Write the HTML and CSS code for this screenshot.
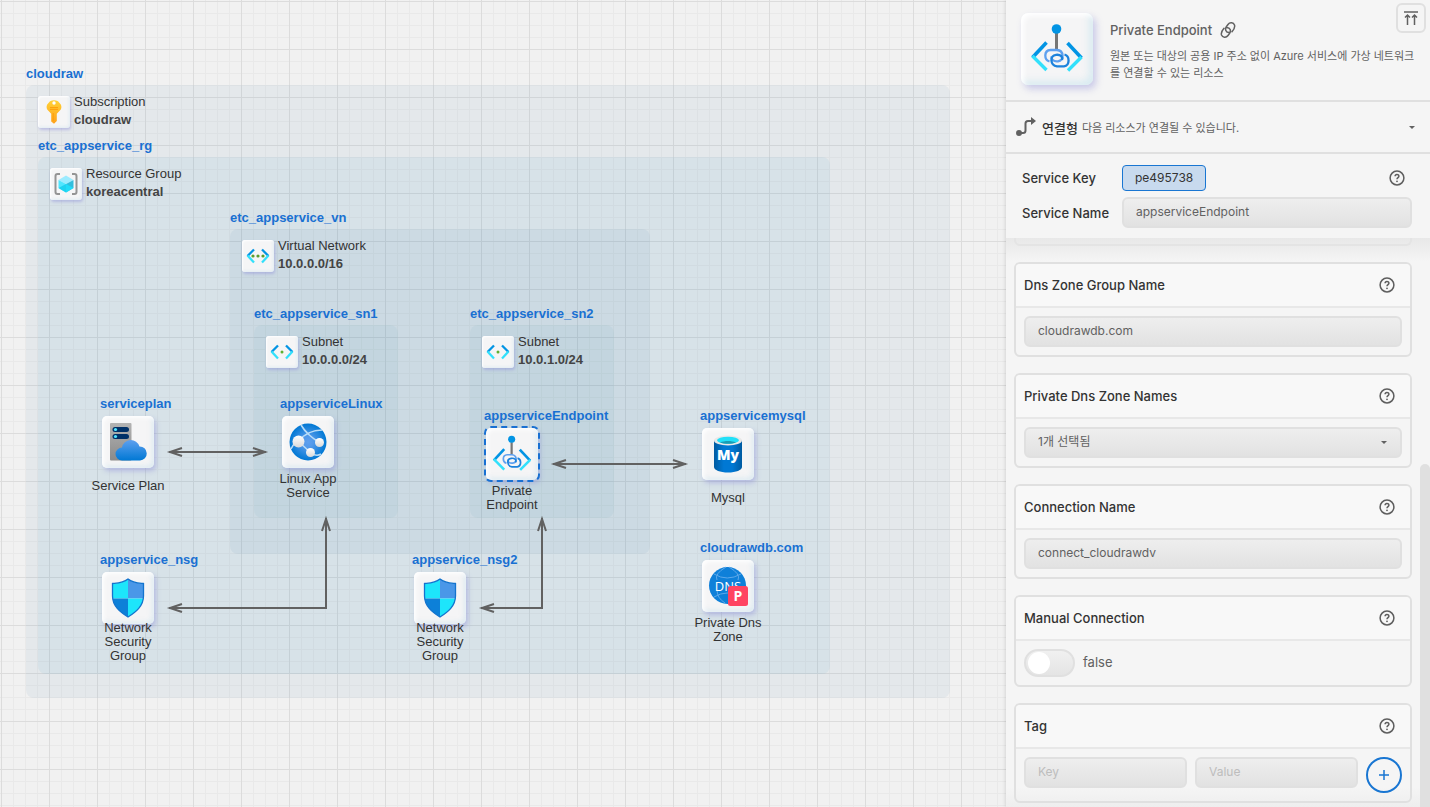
FILE: index.html
```html
<!DOCTYPE html>
<html lang="ko">
<head>
<meta charset="utf-8">
<title>Private Endpoint</title>
<link rel="stylesheet" href="styles.css">
</head>
<body>
<svg class="defs" aria-hidden="true">
  <defs>
    <linearGradient id="g-blue" x1="0" y1="1" x2="0" y2="0"><stop offset="0" stop-color="#0078d4"/><stop offset="1" stop-color="#5ea0ef"/></linearGradient>
    <linearGradient id="g-key" x1="0" y1="0" x2="0" y2="1"><stop offset="0" stop-color="#ffd137"/><stop offset="1" stop-color="#fea11b"/></linearGradient>
    <linearGradient id="g-server" x1="0" y1="0" x2="0" y2="1"><stop offset="0" stop-color="#b3b3b3"/><stop offset="1" stop-color="#8a8a8a"/></linearGradient>
    <linearGradient id="g-db" x1="0" y1="0" x2="1" y2="0"><stop offset="0" stop-color="#005ba1"/><stop offset=".35" stop-color="#0078d4"/><stop offset=".65" stop-color="#0078d4"/><stop offset="1" stop-color="#005ba1"/></linearGradient>
    <radialGradient id="g-globe"><stop offset="0" stop-color="#5ea0ef"/><stop offset=".3" stop-color="#5299ea"/><stop offset="1" stop-color="#0078d4"/></radialGradient>
    <linearGradient id="g-ball" x1="0" y1="0" x2="0" y2="1"><stop offset="0" stop-color="#fff"/><stop offset="1" stop-color="#d9d9d9"/></linearGradient>
    <marker id="arrow" markerUnits="userSpaceOnUse" markerWidth="18" markerHeight="12" refX="14" refY="6" orient="auto-start-reverse"><path d="M1 2 L13 6 L1 10 M13 6 H4" fill="none" stroke="#616161" stroke-width="2"/></marker>
    <symbol id="i-endpoint" viewBox="0 0 54 54">
      <path d="M26.500 11V28" stroke="#767676" stroke-width="3"/>
      <circle cx="26.500" cy="7" r="4.800" fill="#0294e4"/>
      <path d="M16.500 20.500L2.500 35.500" stroke="#0294e4" stroke-width="3.600"/><path d="M2.500 34L16.500 48" stroke="#32e0fb" stroke-width="3.400"/>
      <path d="M37.500 21L51.500 36" stroke="#0294e4" stroke-width="3.600"/><path d="M51.500 35L38 48.500" stroke="#32e0fb" stroke-width="3.400"/>
      <path d="M19.500 39.500C14 38 13.500 28.500 20.500 28H27C34 28.500 34.500 38.500 28 39.300 23.500 39.800 21 37.500 21.500 34.500" fill="none" stroke="#5ea0ef" stroke-width="2.300"/>
      <path d="M34.500 32.500C40 34 40 43.500 34 44.300H27C20 43.500 19.500 33.500 26 32.800 31 32.300 33 35 32 38" fill="none" stroke="#1c82dc" stroke-width="2.300"/>
    </symbol>
    <symbol id="i-key" viewBox="0 0 18 24">
      <path d="M5 1.200Q9-.8 13 1.200L15.800 4.500Q17 7 15.800 9.500L11.800 13.800V21L9 23.700 6.200 21.500V13.800L2.200 9.500Q1 7 2.200 4.500z" fill="url(#g-key)"/>
      <circle cx="9" cy="3" r="1.700" fill="#fff"/><path d="M5 7.600h8M5 9.400h8" stroke="#ff9d0a" stroke-width="1"/><path d="M8.200 13v8" stroke="#ff9d0a" stroke-width="1"/>
    </symbol>
    <symbol id="i-rg" viewBox="0 0 24 22">
      <path d="M6 1H3.500Q1.500 1 1.500 3V19Q1.500 21 3.500 21H6M18 1H20.500Q22.500 1 22.500 3V19Q22.500 21 20.500 21H18" fill="none" stroke="#949494" stroke-width="2"/>
      <path d="M12 2.500L19.500 7 12 11 4.500 7z" fill="#9cebff"/><path d="M4.500 7L12 11V19.500L4.500 15z" fill="#50e6ff"/><path d="M19.500 7L12 11V19.500L19.500 15z" fill="#32bedd"/><path d="M4.500 15L12 11v8.500z" fill="#1fd2f0"/><path d="M19.500 15L12 11v8.500z" fill="#21dcf8"/>
    </symbol>
    <symbol id="i-vnet" viewBox="0 0 24 16">
      <path d="M8 1.500L1.500 8" stroke="#0294e4" stroke-width="2.300"/><path d="M1.500 7.500L8 14.500" stroke="#32e0fb" stroke-width="2.300"/>
      <path d="M16 1.500L22.500 8" stroke="#0294e4" stroke-width="2.300"/><path d="M22.500 7.500L16 14.500" stroke="#32e0fb" stroke-width="2.300"/>
      <g fill="#5a9e2f"><circle cx="7" cy="8" r="1.600"/><circle cx="12" cy="8" r="1.600"/><circle cx="17" cy="8" r="1.600"/></g>
    </symbol>
    <symbol id="i-subnet" viewBox="0 0 24 16">
      <path d="M8 1.500L1.500 8" stroke="#0294e4" stroke-width="2.300"/><path d="M1.500 7.500L8 14.500" stroke="#32e0fb" stroke-width="2.300"/>
      <path d="M16 1.500L22.500 8" stroke="#0294e4" stroke-width="2.300"/><path d="M22.500 7.500L16 14.500" stroke="#32e0fb" stroke-width="2.300"/>
      <circle cx="12" cy="8" r="1.500" fill="#5fb030"/>
    </symbol>
    <symbol id="i-plan" viewBox="0 0 40 40">
      <rect x="2" y="1" width="21.500" height="37.500" rx="1" fill="url(#g-server)"/>
      <rect x="4.500" y="5" width="16.500" height="5" rx="2.500" fill="#003067"/><rect x="4.500" y="12" width="16.500" height="5" rx="2.500" fill="#003067"/>
      <circle cx="7.500" cy="7.500" r="1.600" fill="#50e6ff"/><circle cx="7.500" cy="14.500" r="1.600" fill="#50e6ff"/>
      <path d="M14 38.500A6.500 6.500 0 0 1 14 25.500 9 9 0 0 1 31.500 24.500 7 7 0 0 1 32 38.500z" fill="url(#g-blue)"/>
    </symbol>
    <symbol id="i-app" viewBox="0 0 38 38">
      <circle cx="19" cy="19" r="18.500" fill="url(#g-globe)"/>
      <g fill="none" stroke="#b8dcf8" stroke-width="1.600"><path d="M12 2C16 9 24 16 30 19M33 7C24 7 15 11 10 18M2 26C5 20 8 18 10 18M10 19L21 29M21 30Q28 34 32 31"/></g>
      <circle cx="9.500" cy="18.500" r="6" fill="url(#g-ball)"/><circle cx="30.500" cy="19.500" r="4.500" fill="url(#g-ball)"/><circle cx="21.500" cy="29.500" r="4.500" fill="url(#g-ball)"/>
    </symbol>
    <symbol id="i-mysql" viewBox="0 0 30 38">
      <path d="M1 5V32c0 3 6 5.500 14 5.500S29 35 29 32V5z" fill="url(#g-db)"/>
      <ellipse cx="15" cy="5.500" rx="14" ry="5" fill="#e8e8e8"/><ellipse cx="15" cy="5.300" rx="11" ry="3.500" fill="#21e0f8"/><path d="M7 7.500c5-2 11-2 16 0-4 1.800-12 1.800-16 0z" fill="#1a9bb4"/>
      <text x="15" y="25" text-anchor="middle" class="my-mark">My</text>
    </symbol>
    <symbol id="i-shield" viewBox="0 0 34 40">
      <clipPath id="shield-clip"><path d="M17 1C22 5 27 5 32.500 5.500V18C32.500 28 25 34 17 39 9 34 1.500 28 1.500 18V5.500C7 5 12 5 17 1z"/></clipPath>
      <g clip-path="url(#shield-clip)"><path d="M0 0H17V20.500H0z" fill="#1de5fb"/><path d="M17 0H34V20.500H17z" fill="#4a97e8"/><path d="M0 20.500H17V40H0z" fill="#0d80d8"/><path d="M17 20.500H34V40H17z" fill="#1de5fb"/></g>
      <path d="M17 1C22 5 27 5 32.500 5.500V18C32.500 28 25 34 17 39 9 34 1.500 28 1.500 18V5.500C7 5 12 5 17 1z" fill="none" stroke="#1474ce" stroke-width="1.300"/>
    </symbol>
    <symbol id="i-dns" viewBox="0 0 40 40">
      <circle cx="19.500" cy="19.500" r="18.500" fill="#0f80d9"/>
      <g fill="none" stroke="#5ea9ea" stroke-width="1"><path d="M6 8Q19 16 33 8M6 31Q19 23 33 31M18 1Q6 8 9 14M21 1Q33 8 30 14M9 24Q9 32 17 37"/></g>
      <text x="20" y="25" text-anchor="middle" class="dns-mark">DNS</text>
      <rect x="20" y="20" width="20" height="20" rx="2.500" fill="#ff4461"/>
      <text x="30" y="35" text-anchor="middle" class="p-mark">P</text>
    </symbol>
    <symbol id="i-help" viewBox="0 0 16 16">
      <circle cx="8" cy="8" r="6.900" fill="none" stroke="#5e5e5e" stroke-width="1.500"/>
      <path d="M6.100 6.300C6.100 3.900 9.900 3.900 9.900 6.200 9.900 7.600 8 7.600 8 9.300" fill="none" stroke="#5e5e5e" stroke-width="1.500"/><circle cx="8" cy="11.300" r=".9" fill="#5e5e5e"/>
    </symbol>
  </defs>
</svg>
<div class="app">
  <main class="canvas">
    <section class="group subscription"><h2>cloudraw</h2><div class="info"><span class="tile small"><svg width="18" height="24"><use href="#i-key"/></svg></span><p>Subscription<b>cloudraw</b></p></div></section>
    <section class="group resource-group"><h2>etc_appservice_rg</h2><div class="info"><span class="tile small"><svg width="24" height="22"><use href="#i-rg"/></svg></span><p>Resource Group<b>koreacentral</b></p></div></section>
    <section class="group vnet"><h2>etc_appservice_vn</h2><div class="info"><span class="tile small"><svg width="24" height="16"><use href="#i-vnet"/></svg></span><p>Virtual Network<b>10.0.0.0/16</b></p></div></section>
    <section class="group subnet1"><h2>etc_appservice_sn1</h2><div class="info"><span class="tile small"><svg width="24" height="16"><use href="#i-subnet"/></svg></span><p>Subnet<b>10.0.0.0/24</b></p></div></section>
    <section class="group subnet2"><h2>etc_appservice_sn2</h2><div class="info"><span class="tile small"><svg width="24" height="16"><use href="#i-subnet"/></svg></span><p>Subnet<b>10.0.1.0/24</b></p></div></section>

    <svg class="links" width="1006" height="807" aria-hidden="true">
      <g fill="none" stroke="#616161" stroke-width="2">
        <path d="M169 452H266" marker-start="url(#arrow)" marker-end="url(#arrow)"/>
        <path d="M553 464H686" marker-start="url(#arrow)" marker-end="url(#arrow)"/>
        <path d="M169 608H326V518" marker-start="url(#arrow)" marker-end="url(#arrow)"/>
        <path d="M481 608H542V518" marker-start="url(#arrow)" marker-end="url(#arrow)"/>
      </g>
    </svg>

    <article class="node plan"><h3>serviceplan</h3><span class="tile"><svg width="40" height="40"><use href="#i-plan"/></svg></span><p class="one">Service Plan</p></article>
    <article class="node linux"><h3>appserviceLinux</h3><span class="tile"><svg width="38" height="38"><use href="#i-app"/></svg></span><p>Linux App<br>Service</p></article>
    <article class="node endpoint"><h3>appserviceEndpoint</h3><span class="tile selected"><svg width="40" height="40"><use href="#i-endpoint"/></svg></span><p>Private<br>Endpoint</p></article>
    <article class="node mysql"><h3>appservicemysql</h3><span class="tile"><svg width="30" height="38"><use href="#i-mysql"/></svg></span><p class="one">Mysql</p></article>
    <article class="node nsg1"><h3>appservice_nsg</h3><span class="tile"><svg width="34" height="40"><use href="#i-shield"/></svg></span><p class="three">Network<br>Security<br>Group</p></article>
    <article class="node nsg2"><h3>appservice_nsg2</h3><span class="tile"><svg width="34" height="40"><use href="#i-shield"/></svg></span><p class="three">Network<br>Security<br>Group</p></article>
    <article class="node dns"><h3>cloudrawdb.com</h3><span class="tile"><svg width="40" height="40"><use href="#i-dns"/></svg></span><p>Private Dns<br>Zone</p></article>
  </main>

  <aside class="panel">
    <header class="summary">
      <span class="tile large"><svg width="54" height="54"><use href="#i-endpoint"/></svg></span>
      <div class="summary-text">
        <h1>Private Endpoint <a href="#docs" aria-label="Documentation"><svg width="16" height="16" viewBox="0 0 16 16" fill="none" stroke="#616161" stroke-width="1.500" stroke-linecap="round"><path d="M9.200 10.500C5.500 10.500 4.800 7 6.500 4.500L8 2.500C10-.2 13.500.6 14.500 3 15.300 5.500 14 7.500 12 9.800M6.800 5.500C10.500 5.500 11.200 9 9.500 11.500L8 13.500C6 16.200 2.500 15.400 1.500 13 .7 10.500 2 8.500 4 6.200"/></svg></a></h1>
        <p>원본 또는 대상의 공용 IP 주소 없이 Azure 서비스에 가상 네트워크를 연결할 수 있는 리소스</p>
      </div>
      <button class="top-button" type="button" aria-label="Scroll to top"><svg width="14" height="14" viewBox="0 0 14 14"><path d="M0 1H14M3.500 14V4.500M1 6.500L3.500 4 6 6.500M10.500 14V4.500M8 6.500L10.500 4 13 6.500" fill="none" stroke="#616161" stroke-width="1.500"/></svg></button>
    </header>

    <button class="connect" type="button">
      <svg width="20" height="20" viewBox="0 0 20 20"><circle cx="3" cy="16" r="3" fill="#616161"/><path d="M3 16H7Q9.500 16 9.500 13.500V6.500Q9.500 4 12 4H16" fill="none" stroke="#616161" stroke-width="2"/><path d="M15 0L20 4 15 8z" fill="#616161"/></svg>
      <strong>연결형</strong><span>다음 리소스가 연결될 수 있습니다.</span><i class="caret"></i>
    </button>

    <section class="service">
      <div class="row"><span class="label">Service Key</span><output class="key">pe495738</output><button class="help" type="button" aria-label="Help"><svg width="16" height="16"><use href="#i-help"/></svg></button></div>
      <div class="row"><label class="label" for="service-name">Service Name</label><input class="field" id="service-name" value="appserviceEndpoint"></div>
    </section>

    <div class="properties">
      <div class="card-end"></div>
      <section class="card"><header><label for="zone-group">Dns Zone Group Name</label><button class="help" type="button" aria-label="Help"><svg width="16" height="16"><use href="#i-help"/></svg></button></header><div class="body"><input class="field" id="zone-group" value="cloudrawdb.com"></div></section>
      <section class="card"><header><label for="zone-names">Private Dns Zone Names</label><button class="help" type="button" aria-label="Help"><svg width="16" height="16"><use href="#i-help"/></svg></button></header><div class="body select-wrap"><select class="field" id="zone-names"><option>1개 선택됨</option></select><i class="caret"></i></div></section>
      <section class="card"><header><label for="connection">Connection Name</label><button class="help" type="button" aria-label="Help"><svg width="16" height="16"><use href="#i-help"/></svg></button></header><div class="body"><input class="field" id="connection" value="connect_cloudrawdv"></div></section>
      <section class="card"><header><span>Manual Connection</span><button class="help" type="button" aria-label="Help"><svg width="16" height="16"><use href="#i-help"/></svg></button></header><div class="body"><input class="switch" type="checkbox" role="switch" id="manual"><label class="state" for="manual">false</label></div></section>
      <section class="card"><header><span>Tag</span><button class="help" type="button" aria-label="Help"><svg width="16" height="16"><use href="#i-help"/></svg></button></header><div class="body tags"><input class="field" placeholder="Key" aria-label="Key"><input class="field" placeholder="Value" aria-label="Value"><button class="add" type="button" aria-label="Add tag"><svg width="12" height="12" viewBox="0 0 12 12"><path d="M6 1V11M1 6H11" stroke="#1976d2" stroke-width="1.500"/></svg></button></div></section>
      <div class="thumb"></div>
    </div>
  </aside>
</div>
</body>
</html>
```
FILE: styles.css
```css
* { box-sizing: border-box; }
body { margin: 0; background: #f5f5f5; color: #333; font-family: Inter, "Noto Sans CJK KR", sans-serif; }
h1, h2, h3, p { margin: 0; }
button { font: inherit; color: inherit; cursor: pointer; }
svg { display: block; flex: none; }
.defs { position: absolute; width: 0; height: 0; }
.app { display: flex; height: 100vh; overflow: hidden; }

.canvas {
  position: relative; flex: 1; min-width: 0; overflow: hidden;
  font: 13px/18px "Liberation Sans", Arial, sans-serif;
  background-color: #f1f1f1;
  background-image:
    linear-gradient(#dcdcdc 1px, transparent 1px), linear-gradient(90deg, #dcdcdc 1px, transparent 1px),
    linear-gradient(#e9e9e9 1px, transparent 1px), linear-gradient(90deg, #e9e9e9 1px, transparent 1px);
  background-size: 48px 48px, 48px 48px, 12px 12px, 12px 12px;
  background-position: 1px 1px;
}
.group { position: absolute; border-radius: 8px; background: rgba(35, 100, 155, .06); }
.group h2, .node h3 { font-size: 13px; font-weight: 700; color: #1970d2; white-space: nowrap; }
.group h2 { position: absolute; left: 0; top: -20px; }
.info { display: flex; gap: 4px; padding: 11px 12px; }
.info p { margin-top: -3px; white-space: nowrap; }
.info b { display: block; color: #444; }
.subscription { left: 26px; top: 85px; width: 924px; height: 613px; }
.group.resource-group { left: 38px; top: 157px; width: 792px; height: 517px; background: rgba(25, 130, 180, .06); }
.vnet { left: 230px; top: 229px; width: 420px; height: 325px; }
.subnet1 { left: 254px; top: 325px; width: 144px; height: 193px; }
.subnet2 { left: 470px; top: 325px; width: 144px; height: 193px; }
.group.subnet1, .group.subnet2 { background: rgba(35, 130, 160, .05); }
.tile {
  display: flex; align-items: center; justify-content: center; flex: none;
  width: 52px; height: 52px; border-radius: 5px; background: #f5f5f6;
  box-shadow: 2px 3px 5px rgba(140, 140, 215, .45), inset 2px 2px 4px #fff, inset -2px -2px 5px rgba(210, 230, 240, .7);
}
.tile.small { width: 32px; height: 32px; border-radius: 3px; box-shadow: 1px 2px 3px rgba(140, 140, 215, .45), inset 1px 1px 2px #fff, inset -1px -1px 3px rgba(210, 230, 240, .6); }
.tile.large { width: 72px; height: 72px; border-radius: 7px; box-shadow: 3px 4px 7px rgba(140, 140, 215, .42), inset 3px 3px 5px #fff, inset -4px -4px 7px rgba(210, 233, 240, .8); }
.tile.selected { outline: 2px dashed #1970d2; outline-offset: 0; }
.links { position: absolute; left: 0; top: 0; }
.node { position: absolute; width: 52px; display: flex; flex-direction: column; align-items: center; }
.node h3 { width: 56px; height: 21px; }
.node p { margin-top: 4px; line-height: 14px; text-align: center; white-space: nowrap; }
.node .one { margin-top: 11px; }
.node .three { margin-top: -3px; }
.plan { left: 102px; top: 395px; }
.linux { left: 282px; top: 395px; }
.endpoint { left: 486px; top: 407px; }
.mysql { left: 702px; top: 407px; }
.nsg1 { left: 102px; top: 551px; }
.nsg2 { left: 414px; top: 551px; }
.dns { left: 702px; top: 539px; }
.my-mark { font: 800 14px "Open Sans", sans-serif; fill: #fff; }
.dns-mark { font: 13px "Open Sans", sans-serif; fill: #fff; }
.p-mark { font: 700 14px "Open Sans", sans-serif; fill: #fff; }

.panel { position: relative; display: flex; flex-direction: column; width: 424px; flex: none; background: #f5f5f5; box-shadow: 0 0 4px rgba(0, 0, 0, .18); }
.summary { position: relative; display: flex; gap: 17px; min-height: 102px; padding: 13px 8px 13px 15px; border-bottom: 2px solid #e0e0e0; }
.summary-text { flex: 1; padding-top: 7px; color: #616161; }
.summary h1 { display: flex; align-items: center; gap: 8px; height: 20px; font-size: 13px; font-weight: 500; }
.summary p { margin-top: 8px; font-size: 11px; line-height: 17px; }
.top-button { position: absolute; right: 4px; top: 3px; display: grid; place-items: center; width: 30px; height: 30px; padding: 0; border: 2px solid #e0e0e0; border-radius: 6px; background: #f5f5f5; }
.connect { display: flex; align-items: center; min-height: 52px; padding: 0 15px 0 10px; border: 0; border-bottom: 2px solid #e0e0e0; background: none; text-align: left; font-size: 11px; color: #616161; }
.connect strong { margin: 0 4px 0 6px; font-size: 13px; font-weight: 500; color: #333; }
.caret { width: 0; height: 0; border: 3px solid transparent; border-top-color: #616161; border-bottom: 0; }
.connect .caret { margin-left: auto; }
.service { display: grid; gap: 6px; padding: 11px 18px 10px 16px; }
.row { display: flex; align-items: center; }
.label { width: 100px; font-size: 13px; line-height: 20px; font-weight: 500; }
.key { height: 26px; padding: 0 12px; border: 1px solid #1976d2; border-radius: 4px; background: #c8daee; font-size: 12px; line-height: 24px; }
.help { display: block; margin-left: auto; padding: 0; border: 0; background: none; }
.row .help { margin-right: 7px; }
.field { flex: 1; min-width: 0; height: 31px; padding: 0 12px 2px; border: 2px solid #e0e0e0; border-radius: 6px; outline: 0; background: linear-gradient(#eee, #e2e2e2); color: #616161; font: 12px Inter, "Noto Sans CJK KR", sans-serif; appearance: none; }
.field::placeholder { color: #bdbdbd; opacity: 1; }
.properties {
  position: relative; flex: 1; min-height: 0; overflow: hidden;
  display: flex; flex-direction: column; gap: 16px; padding: 0 18px 0 8px;
  background: linear-gradient(#e8e8e8, rgba(245, 245, 245, 0) 24px), linear-gradient(transparent calc(100% - 20px), #eee);
}
.card-end { flex: none; height: 8px; border: 2px solid #e4e4e4; border-top: 0; border-radius: 0 0 6px 6px; }
.card { flex: none; border: 2px solid #e0e0e0; border-radius: 6px; }
.card header { display: flex; align-items: center; height: 44px; padding: 0 15px 0 8px; border-bottom: 2px solid #e8e8e8; background: #f8f8f8; border-radius: 4px 4px 0 0; font-size: 13px; font-weight: 500; }
.body { position: relative; display: flex; padding: 8px; }
.select-wrap .caret { position: absolute; right: 23px; top: 22px; }
.switch { appearance: none; display: flex; width: 51px; height: 28px; margin: 0; padding: 1px 2px; border: 2px solid #e0e0e0; border-radius: 14px; background: linear-gradient(#f0f0f0, #e4e4e4); }
.switch::before { content: ""; width: 22px; height: 22px; border-radius: 50%; background: #fff; }
.switch:checked { justify-content: flex-end; }
.state { margin-left: 8px; font-size: 13px; line-height: 26px; color: #616161; }
.tags { gap: 8px; }
.add { display: grid; place-items: center; width: 36px; height: 36px; padding: 0; border: 2px solid #1976d2; border-radius: 50%; background: none; }
.thumb { position: absolute; right: 0; top: 226px; bottom: 0; width: 10px; border-radius: 5px 5px 0 0; background: #e0e0e0; }
```
